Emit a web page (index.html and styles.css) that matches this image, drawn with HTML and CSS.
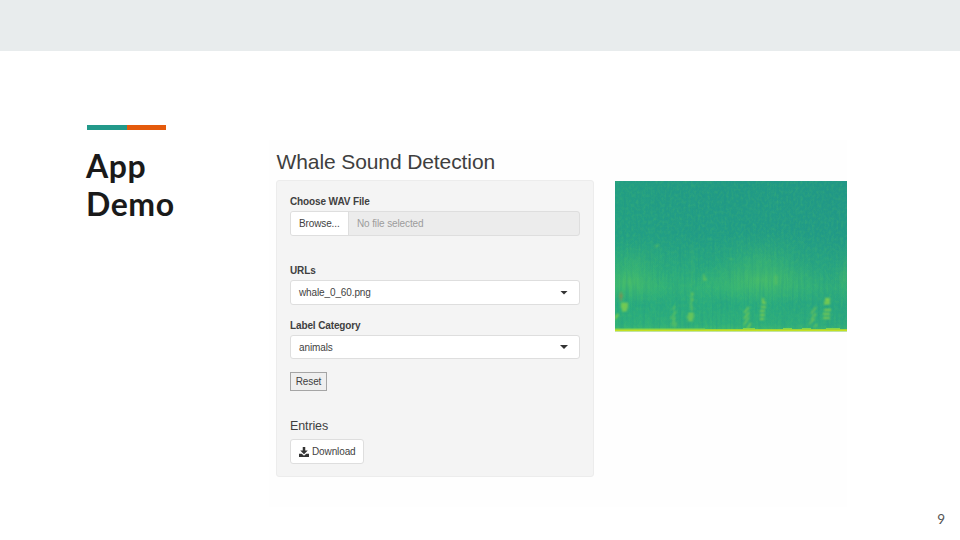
FILE: index.html
```html
<!DOCTYPE html>
<html lang="en">
<head>
<meta charset="utf-8">
<title>App Demo</title>
<link rel="stylesheet" href="styles.css">
</head>
<body>
<div class="slide">
  <header class="band"></header>
  <main class="content">
    <section class="heading">
      <div class="accent"></div>
      <h1>App<br>Demo</h1>
    </section>
    <section class="app">
      <h2>Whale Sound Detection</h2>
      <div class="columns">
        <form class="panel">
          <div class="label">Choose WAV File</div>
          <div class="file"><span class="browse">Browse...</span><span class="filename">No file selected</span></div>
          <div class="label urls">URLs</div>
          <div class="select"><span>whale_0_60.png</span><i class="caret"></i></div>
          <div class="label category">Label Category</div>
          <div class="select short"><span>animals</span><i class="caret"></i></div>
          <button type="button" class="reset">Reset</button>
          <h3>Entries</h3>
          <div class="download">
            <svg width="10" height="10" viewBox="0 0 20 20"><path fill="#333" d="M7.500 0h5v7h5L10 14.500 2.500 7h5zM0 13.500h5.500L10 17.500l4.500-4H20V20H0z"/></svg>
            <span>Download</span>
          </div>
        </form>
        <svg class="spectrogram" viewBox="0 0 232 151" preserveAspectRatio="none">
          <defs>
            <linearGradient id="base" x1="0" y1="0" x2="0" y2="1">
              <stop offset="0" stop-color="#219a86"/>
              <stop offset=".35" stop-color="#219d86"/>
              <stop offset=".58" stop-color="#28a880"/>
              <stop offset=".7" stop-color="#31b279"/>
              <stop offset=".82" stop-color="#28ab7f"/>
              <stop offset=".95" stop-color="#2eb07b"/>
              <stop offset="1" stop-color="#48bd6d"/>
            </linearGradient>
            <linearGradient id="shade" x1="0" y1="0" x2="1" y2="0">
              <stop offset="0" stop-color="#2bb179" stop-opacity=".2"/>
              <stop offset=".5" stop-color="#2a9d87" stop-opacity="0"/>
              <stop offset="1" stop-color="#258d8b" stop-opacity=".2"/>
            </linearGradient>
            <radialGradient id="glow">
              <stop offset="0" stop-color="#5dc85c" stop-opacity=".55"/>
              <stop offset=".5" stop-color="#4dc066" stop-opacity=".28"/>
              <stop offset="1" stop-color="#40bd70" stop-opacity="0"/>
            </radialGradient>
            <filter id="grain" x="0" y="0" width="100%" height="100%" color-interpolation-filters="sRGB">
              <feTurbulence type="fractalNoise" baseFrequency=".42 .3" numOctaves="3" seed="8"/>
              <feColorMatrix values="0 0 0 0 .3  0 0 0 0 .75  0 0 0 0 .4  1.300 0 0 0 -.5"/>
            </filter>
            <filter id="streaks" x="0" y="0" width="100%" height="100%" color-interpolation-filters="sRGB">
              <feTurbulence type="fractalNoise" baseFrequency=".36 .03" numOctaves="2" seed="4"/>
              <feColorMatrix values="0 0 0 0 .12  0 0 0 0 .58  0 0 0 0 .53  1.500 0 0 0 -.6"/>
            </filter>
            <filter id="soft" x="-20%" y="-20%" width="140%" height="140%"><feGaussianBlur stdDeviation=".8"/></filter>
          </defs>
          <rect width="232" height="151" fill="url(#base)"/>
          <rect width="232" height="151" fill="url(#shade)"/>
          <ellipse cx="14" cy="101" rx="46" ry="24" fill="url(#glow)"/>
          <ellipse cx="147" cy="99" rx="68" ry="26" fill="url(#glow)"/>
          <ellipse cx="148" cy="77" rx="54" ry="32" fill="url(#glow)" opacity=".35"/>
          <ellipse cx="20" cy="80" rx="44" ry="22" fill="url(#glow)" opacity=".35"/>
          <ellipse cx="232" cy="95" rx="14" ry="34" fill="url(#glow)" opacity=".5"/>
          <rect width="232" height="151" filter="url(#grain)" opacity=".45"/>
          <rect width="232" height="151" filter="url(#streaks)" opacity=".45"/>
          <g filter="url(#soft)" fill="none" stroke="#8fd544" stroke-width="1.400" opacity=".85">
            <path d="M6 123h7M6 126h7M7 129h5M0 138l3-5" stroke-width="2.400"/>
            <path d="M89 93v7M88 98h4M77 111l-1 15M76 113h3M76 119h3M77 125v5" opacity=".7"/>
            <path d="M73 133h6M72 136h7M73 139h5" stroke-width="2.200"/>
            <path d="M60 125l-2 4M61 130l-5 8M60 136l-3 9M61 141l-1 5" opacity=".75"/>
            <path d="M134 126l-5 6M134 131l-5 7M134 136l-5 8M136 142l-4 6"/>
            <path d="M148 117v4M147 122h4M146 126h5M145 130h5M145 134h5M145 138h4" stroke-width="1.900"/>
            <path d="M201 126l-5 7M201 132l-5 7M200 138l-6 5M202 143l-3 3" opacity=".85"/>
            <path d="M210 118.500h5M209 122h6" stroke-width="3"/>
            <path d="M209 129h7M208 133h7M208 137h7" stroke-width="1.900"/>
            <path d="M161 94v10M154 79h1M115 78h2M182 79h1M40 66l4-2" opacity=".5"/>
            <path d="M77 63v42M229 78v24M226 91v9" opacity=".18"/>
            <path d="M6 111v9M4 115h4" stroke="#b0803f" opacity=".8"/>
          </g>
          <path d="M0 149.200H232" stroke="#c4e022" stroke-width="1.800"/>
          <path d="M0 148H90M128 147.500h12M168 147.500h9M187 147.500h9M211 147.500h14" stroke="#85d54a" stroke-width="1"/>
          <path d="M0 150.600H232" stroke="#f2f5b8" stroke-width=".8"/>
        </svg>
      </div>
    </section>
  </main>
  <footer>9</footer>
</div>
</body>
</html>
```
FILE: styles.css
```css
* { box-sizing: border-box; }
body { margin: 0; background: #fff; }
.slide {
  width: 960px;
  height: 540px;
  display: flex;
  flex-direction: column;
  overflow: hidden;
  font-family: "Liberation Sans", Arial, sans-serif;
  font-size: 10px;
  letter-spacing: -.12px;
  color: #3f3f3f;
}
.band { height: 51px; flex: none; background: #e8eced; }
.content { flex: 1; display: flex; padding: 74px 113px 0 86px; }
.heading { width: 183px; flex: none; }
.accent {
  width: 78.500px;
  height: 5px;
  margin-left: 1px;
  background: linear-gradient(to right, #22998a 50%, #e45a0c 50%);
}
h1 {
  margin: 17px 0 0;
  font: 700 32px/38px Lato, sans-serif;
  letter-spacing: .55px;
  color: #1a1a1a;
}
.app { width: 578px; height: 367px; margin-top: 15px; padding: 9px 0 0 7px; background: #fefefe; }
h2 { margin: 0; padding-left: .5px; font-size: 21px; letter-spacing: -.1px; font-weight: 400; line-height: 26px; height: 31px; }
.columns { display: flex; gap: 21px; align-items: flex-start; }
.panel {
  width: 318px;
  height: 297px;
  padding: 14px 13px 0;
  border: 1px solid #ececec;
  border-radius: 3px;
  background: #f4f4f4;
}
.label { font-weight: 700; line-height: 14px; height: 16px; }
.file { display: flex; height: 25px; line-height: 23px; border: 1px solid #dedede; border-radius: 3px; overflow: hidden; background: #ececec; }
.browse { width: 58px; padding-left: 8px; background: #fff; border-right: 1px solid #dedede; }
.filename { padding-left: 8px; color: #9c9c9c; }
.urls { margin-top: 28px; }
.select {
  display: flex;
  justify-content: space-between;
  align-items: center;
  height: 25px;
  padding: 0 11px 0 8px;
  border: 1px solid #dedede;
  border-radius: 3px;
  background: #fff;
}
.short { height: 24px; }
.caret { width: 8px; height: 4px; background: #333; clip-path: polygon(0 0, 100% 0, 50% 100%); }
.category { margin-top: 14px; }
.reset {
  display: block;
  width: 37px;
  height: 19px;
  margin: 13px 0 0;
  padding: 0;
  border: 1px solid #a5a5a5;
  border-radius: 0;
  background: #efefef;
  color: #3f3f3f;
  font: inherit;
  letter-spacing: inherit;
}
h3 { margin: 27px 0 0; font-size: 12.500px; line-height: 16px; font-weight: 400; }
.download {
  display: flex;
  align-items: center;
  gap: 3px;
  width: 74px;
  height: 25px;
  margin-top: 5px;
  padding-left: 8px;
  border: 1px solid #dedede;
  border-radius: 3px;
  background: #fff;
}
.spectrogram { display: block; width: 232px; height: 151px; margin-top: 1px; flex: none; }
footer { padding: 0 15px 12px 0; text-align: right; font: 13.500px/17px Lato, sans-serif; color: #555; }
```
